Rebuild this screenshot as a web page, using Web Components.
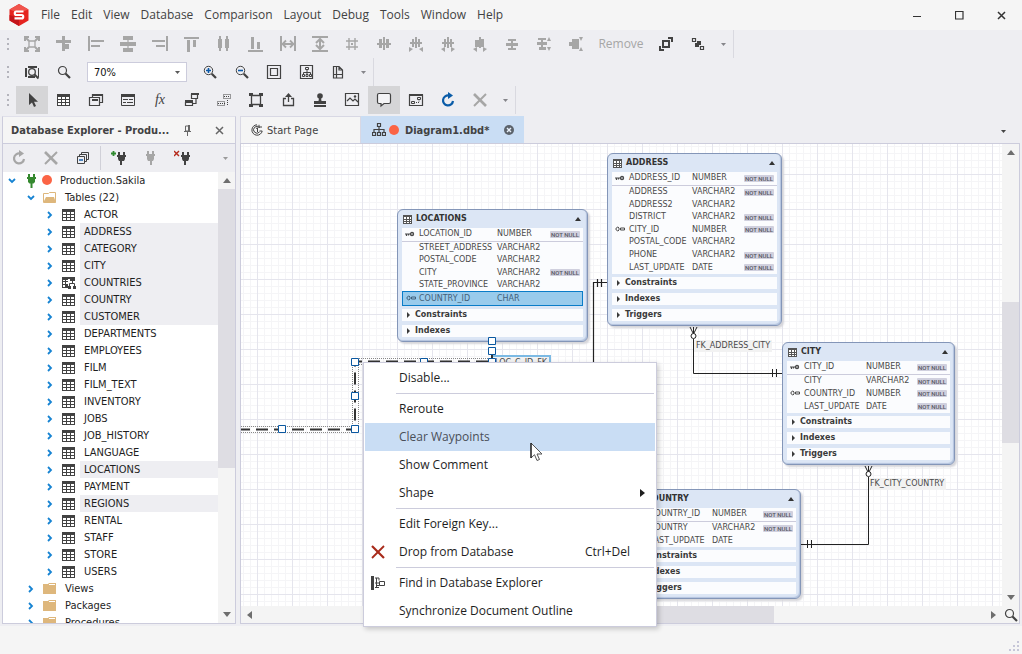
<!DOCTYPE html>
<html lang="en">
<head>
<meta charset="utf-8">
<title>Database Studio</title>
<style>
  :root {
    --line: #ccccdc;
    --chrome: #eeeef2;
    --light: #f5f5f5;
    --ink: #424242;
    --text: #1e1e1e;
    --mute: #a6a6a6;
    --accent: #c9ddf4;
    --ui: "Open Sans", "Noto Sans", sans-serif;
    --tree: "DejaVu Sans Condensed", "DejaVu Sans", sans-serif;
    --diagram: "DejaVu Sans", sans-serif;
  }
  body { margin: 0; background: var(--chrome); font: 11px/16px var(--ui); color: var(--text); }
</style>
</head>
<body>
<studio-app></studio-app>

<script>
const ICONS = {
  logo: [20, 22, '<path d="M10 0 19.5 5.5V16.5L10 22 .5 16.5V5.5Z" fill="#e5241f" stroke="none"/><path d="M10 0 19.5 5.5 10 9 .5 5.5Z" fill="#f0544c" stroke="none"/><path d="M10 22 .5 16.5V11l9.500 3Z" fill="#c4151a" stroke="none"/><path d="M14.500 7.500H7.200q-1.400 0-1.400 1.700T7.200 11h5.600q1.400 0 1.400 1.700t-1.400 1.700H5.500" fill="none" stroke="#fff" stroke-width="2.200"/>'],
  fit: [16, 16, '<path d="M5 5h6v6H5z" stroke-width="1.300"/><path d="M2 2l3 3M14 2l-3 3M2 14l3-3M14 14l-3-3" stroke-width="2"/><path d="M1 5V1h4M11 1h4v4M15 11v4h-4M5 15H1v-4" stroke-width="2"/>'],
  snap: [16, 16, '<path d="M0 4h15v3H0zM6 0h3v15H6zM9 8h4v5H9z" class="f"/>'],
  left: [16, 16, '<path d="M0 0h2v15H0zM3 4h13v2H3zM3 9h9v2H3z" class="f"/>'],
  centerh: [16, 16, '<path d="M3 0h10v4H3zM0 6h16v4H0zM3 12h10v4H3z" class="f"/><path d="M7 4h2v8H7z" class="f" opacity=".6"/>'],
  right: [16, 16, '<path d="M14 0h2v15h-2zM0 4h13v2H0zM4 9h9v2H4z" class="f"/>'],
  top: [16, 16, '<path d="M0 1h15v2H0zM3 4h3v12H3zM9 4h3v7H9z" class="f"/>'],
  middle: [16, 16, '<path d="M2 3h4v9H2zM9 3h4v9H9zM3 0h2v15H3zM10 0h2v15h-2z" class="f"/>'],
  bottom: [16, 16, '<path d="M0 14h15v2H0zM3 1h3v12H3zM9 6h3v7H9z" class="f"/>'],
  width: [16, 16, '<path d="M1 0v15M15 0v15" stroke-width="2"/><path d="M3 8h10M6 4.500 2.500 8 6 11.500M10 4.500 13.500 8 10 11.500" stroke-width="1.800"/>'],
  height: [16, 16, '<path d="M0 1h16M0 15h16" stroke-width="2"/><path d="M8 3v10M4 7l4-4 4 4M4 9l4 4 4-4" stroke-width="2"/>'],
  hash: [16, 16, '<path d="M5 2v12M11 2v12M2 5h12M2 11h12" stroke-width="1.400"/><path d="M7 7h2v2H7z" class="f"/>'],
  space: [16, 16, '<path d="M3 3h3v9H3zM7 1h2v13H7zM10 3h3v9h-3zM1 7h14v2H1z" class="f"/>'],
  spacemore: [16, 16, '<path d="M4 3h2v8H4zM7 1h2v11H7zM10 3h2v8h-2zM2 6h12v2H2zM1 11l4 2-4 3zM15 11l-4 2 4 3z" class="f"/>'],
  spaceless: [16, 16, '<path d="M4 3h2v8H4zM7 1h2v11H7zM10 3h2v8h-2zM2 6h12v2H2zM5 11l-4 2 4 3zM11 11l4 2-4 3z" class="f"/>'],
  spacenone: [16, 16, '<path d="M3 4h4v7H3zM7 1h2v11H7zM9 3h3v8H9zM5 11l-4 2 4 3zM11 11l4 2-4 3z" class="f"/>'],
  vspace: [16, 16, '<path d="M4 3h8v2H4zM2 7h12v3H2zM4 12h8v2H4zM7 5h2v8H7z" class="f"/>'],
  vspacemore: [16, 16, '<path d="M2 2h8v2H2zM1 6h10v3H1zM3 11h7v3H3zM5 4h2v8H5zM11 5l2-4 2 4zM11 11l2 4 2-4z" class="f"/>'],
  vspacenone: [16, 16, '<path d="M4 3h7v3H4zM1 6h10v4H1zM4 10h7v3H4zM11 1l2 4 2-4zM11 15l2-4 2 4z" class="f"/>'],
  grow: [16, 16, '<path d="M5 5h6v6H5z" stroke-width="2"/><path d="M10 2h4v4M2 10v4h4" stroke-width="2"/>'],
  chain: [16, 16, '<path d="M2.500 2.500h3v3h-3zM10.500 10.500h3v3h-3z" stroke-width="1.200"/><path d="M7 5h4v4H9v2H5V7h2z" class="f"/>'],
  view: [16, 16, '<path d="M4 2h9v2H4zM4 12h7v2H4zM1 4h2v9H1zM14 4h1v9h-1z" class="f"/><circle cx="8" cy="8" r="3.300" stroke-width="1.300"/><path d="m10.500 10.500 4 4" stroke-width="2"/>'],
  zoom: [16, 16, '<circle cx="6.500" cy="6.500" r="4" stroke-width="1.200"/><path d="m9.500 9.500 4.500 4.500" stroke-width="2.200"/>'],
  zoomin: [16, 16, '<circle cx="6.500" cy="6.500" r="4.200"/><path d="m9.700 9.700 4.300 4.300" stroke-width="2.200"/><path d="M4 6.500h5M6.500 4v5" stroke="#0a58a8" stroke-width="1.600"/>'],
  zoomout: [16, 16, '<circle cx="6.500" cy="6.500" r="4.200"/><path d="m9.700 9.700 4.300 4.300" stroke-width="2.200"/><path d="M4 6.500h5" stroke="#0a58a8" stroke-width="1.600"/>'],
  page: [16, 16, '<path d="M1.500 1.500h13v13h-13zM4.500 4.500h7v7h-7z" stroke-width="1.200"/>'],
  diagram: [16, 16, '<path d="M2.500 1.500h12v13h-12z" stroke-width="1.200"/><path d="M7.500 3.500h3v2h-3zM4.500 10.500h2v2h-2zM8 10.500h2v2H8zM11.500 10.500h2v2h-2zM9 6v4M5.500 10V8.500h7V10"/>'],
  pages: [16, 16, '<path d="M3.500 2.500H9l3.500 3.500v8h-9zM6.500 2v12M3 10.500h10M9 2.500V6h3.500" stroke-width="1.200"/>'],
  pointer: [16, 16, '<path d="M5 1v12l3-2.500L10 15l2-1-2-4.200h4z" class="f"/>'],
  table: [14, 12, '<path d="M0 0h13v12H0z" class="f"/><path d="M1 3h3v2H1zM5 3h3v2H5zM9 3h3v2H9zM1 6h3v2H1zM5 6h3v2H5zM9 6h3v2H9zM1 9h3v2H1zM5 9h3v2H5zM9 9h3v2H9z" class="w"/>'],
  smalltable: [9, 9, '<path d="M0 0h9v9H0z" class="f"/><path d="M1 2h2v2H1zM4 2h2v2H4zM7 2h1v2H7zM1 5h2v1H1zM4 5h2v1H4zM7 5h1v1H7zM1 7h2v1H1zM4 7h2v1H4zM7 7h1v1H7z" class="w"/>'],
  tabletree: [14, 12, '<path d="M0 0h6v11H0zM6 0h2v2H6z" class="f"/><path d="M1 3h2v1H1zM4 3h2v1H4zM1 5h2v2H1zM4 5h2v2H4zM1 8h2v2H1z" class="w"/><path d="M8 0h5v4H8zM6 9h3v3H6zM11 9h3v3h-3z" class="f"/><path d="M10.500 4v2.500M7.500 9V6.500h5V9"/>'],
  copies: [16, 16, '<path d="M4.500 5V2.500h10v8H12M1.500 5.500h10v8h-10z" stroke-width="1.200"/><path d="M4 7h6v2H4zM4 2h11v2H4z" class="f"/>'],
  form: [16, 16, '<path d="M1.500 3h13v10.500h-13z" /><path d="M1 2h14v3H1zM3 7h5v1H3zM9 7h4v1H9zM3 10h3v1H3zM7 10h6v1H7z" class="f"/>'],
  rel: [16, 16, '<path d="M7 1h8v2H7zM1 8h8v3H1z" class="f"/><path d="M7.500 2.500h6v4h-6zM1.500 10.500h7v3h-7zM9 11.500h3V7" stroke-width="1.200"/>'],
  reldot: [16, 16, '<path d="M7.500 2.500h7v4h-7zM1.500 9.500h7v4h-7zM2 11.500h8M8 4.500h6M11.500 13V7" stroke-dasharray="1 1"/>'],
  frame: [16, 16, '<path d="M3.500 3.500h9v9h-9z" stroke-width="1.300"/><path d="M1 1h4v3H1zM11 1h4v3h-4zM1 12h4v3H1zM11 12h4v3h-4z" class="f"/>'],
  exporty: [16, 16, '<path d="M6 6.500H3.500v7h10v-7H11M8.500 3v7" stroke-width="1.300"/><path d="M5 5 8.500 1 12 5z" class="f"/>'],
  stamp: [16, 16, '<circle cx="8" cy="4" r="2.800" class="f"/><path d="M7 6h2l.5 3H14v3H2V9h4.500zM2 13h12v2H2z" class="f"/>'],
  image: [16, 16, '<path d="M1.500 1.500h13v12h-13zM3 9l3-3 3 3 2-2 3 3" stroke-width="1.200"/><circle cx="11" cy="4.500" r="1.200" class="f"/>'],
  note: [16, 16, '<path d="M3 1.500h10q1.500 0 1.500 1.500v7q0 1.500-1.500 1.500H8L5 14v-2.500H3Q1.500 11.500 1.500 10V3Q1.500 1.500 3 1.500Z" stroke-width="1.200" fill="#f4f4f6"/>'],
  overview: [16, 16, '<path d="M1.500 3h13v10.500h-13z" stroke-width="1.200"/><path d="M1 2h14v2H1z" class="f"/><path d="M3.500 9.500h3v2h-3zM9.500 5.500h3v2h-3z"/><path d="M8 10.500h3v-2" stroke-dasharray="1 1"/>'],
  refresh: [16, 16, '<path d="M9 3.500A5 5 0 1 0 13 9" stroke-width="2.200"/><path d="M8 0v7l5-3.500z" class="f"/>'],
  cross: [16, 16, '<path d="m2 2 12 12" stroke-width="2.600"/><path d="M14 2 2 14" stroke-width="2"/>'],
  collapse: [16, 16, '<path d="M2.500 6.500h7v7h-7zM4.500 6V4.500h7v7H10M6.500 4V2.500h7v7H12"/><path d="M4 10h4" stroke="#0a58a8" stroke-width="1.400"/>'],
  plug: [16, 16, '<path d="M5 1h2v4H5zM10 1h2v4h-2zM4 4h9v2H4zM5 6h7v3l-1 2H6L5 9zM8 11h2v4H8z" class="f"/>'],
  plugadd: [16, 16, '<path d="M8 2h2v3H8zM13 2h2v3h-2zM7 5h9v2H7zM8 7h7v2l-1 2H9L8 9zM10 11h2v4h-2z" class="f"/><path d="M1 3.500h5M3.500 1v5" stroke="#2f8a2f" stroke-width="1.800"/>'],
  plugdel: [16, 16, '<path d="M8 2h2v3H8zM13 2h2v3h-2zM7 5h9v2H7zM8 7h7v2l-1 2H9L8 9zM10 11h2v4h-2z" class="f"/><path d="m0 1 5 5M5 1 0 6" stroke="#b52a1c" stroke-width="1.400"/>'],
  tplug: [9, 14, '<path d="M1 0h2v4H1zM6 0h2v4H6zM0 3h9v2H0zM1 5h7v3L6.500 9.500h-4L1 8zM3.500 9h2v5h-2z" class="f"/>'],
  folder: [14, 12, '<path d="M0 1h5l1-1h7v11H0z" class="f"/><path d="M6 1.500h6" stroke="#fff"/>'],
  folderopen: [14, 12, '<path d="M.5 10V1.500h5l1-1h6V10" /><path d="M3 5h8l2 6H0z" class="f"/>'],
  chevright: [6, 8, '<path d="m1 1 3 3-3 3" stroke-width="1.800"/>'],
  chevdown: [8, 6, '<path d="m1 1 3 3 3-3" stroke-width="1.800"/>'],
  pin: [8, 11, '<path d="M1.500 1h4v5h-4z"/><path d="M4 0h2v6H4zM0 6h7v1H0zM3 7h1v4H3z" class="f"/>'],
  close: [9, 9, '<path d="m1 1 7 7M8 1 1 8" stroke-width="1.500"/>'],
  min: [9, 9, '<path d="M0 5h8v1H0z" class="f"/>'],
  max: [9, 9, '<path d="M.5.500h7.500v7.500H.5z" stroke-width="1.200"/>'],
  spiral: [12, 12, '<path d="M6 .8A5.200 5.200 0 1 0 11.200 7H8.500M8.500 3.500A3.400 3.400 0 1 0 8.500 8M8 .8V4M11 3H8M5 4.500l1.500-.7V8"/>'],
  orgchart: [14, 14, '<path d="M5.500.5h3v3h-3zM.5 9.500h3v3h-3zM5.500 9.500h3v3h-3zM10.500 9.500h3v3h-3zM7 4v5M2 9V6.500h10V9" stroke-width="1.200"/>'],
  tabclose: [10, 10, '<circle cx="5" cy="5" r="5" class="f"/><path d="m3 3 4 4M7 3 3 7" stroke="#e9f1fb" stroke-width="1.400"/>'],
  key: [10, 6, '<path d="M0 3h6M1.500 3v2M3.500 3v1.500" stroke-width="1.200"/><circle cx="7" cy="3" r="1.500" stroke-width="1.400"/>'],
  fkey: [10, 6, '<path d="M4 1.700A1.800 1.800 0 1 0 4 4.300M3 3h2"/><path d="M5.500 2h4v2h-4z"/>'],
  down: [5, 3, '<path d="M0 0h5L2.500 3z" class="f"/>'],
  sup: [8, 5, '<path d="M0 5h8L4 0z" class="f"/>'],
  fold: [6, 4, '<path d="M0 4h6L3 0z" class="f"/>'],
  sdown: [8, 5, '<path d="M0 0h8L4 5z" class="f"/>'],
  sleft: [5, 8, '<path d="M5 0v8L0 4z" class="f"/>'],
  sright: [5, 8, '<path d="M0 0v8l5-4z" class="f"/>'],
  small: [3, 6, '<path d="M0 0v6l3-3z" class="f"/>'],
  drop: [14, 14, '<path d="m1 1 12 12" stroke-width="2.200"/><path d="M13 1 1 13" stroke-width="1.800"/>'],
  find: [15, 14, '<path d="M0 0h3v14H0z" class="f"/><path d="M4 2h4v2.500M4 11.500h4M4 7h4.500M5.500 2v10M8.500 5.500h5v4h-5zM5.500 9.500h3"/>']
};

class BaseElement extends HTMLElement {
  connectedCallback() {
    if (this.shadowRoot) return;
    this.attachShadow({ mode: 'open' }).innerHTML =
      `<style>*{box-sizing:border-box}button{font:inherit;color:inherit;background:none;border:0;padding:0;margin:0}${this.css()}</style>${this.html()}`;
  }
  css() { return ''; }
  html() { return ''; }
  attr(n, d = '') { return this.getAttribute(n) ?? d; }
}
const define = (name, cls) => customElements.define(name, cls);

define('ui-icon', class extends BaseElement {
  css() { return `:host{display:inline-flex;flex:none}svg{display:block;fill:none;stroke:currentColor}.f{fill:currentColor;stroke:none}.w{fill:#fff;stroke:none}`; }
  html() {
    const [w, h, body] = ICONS[this.attr('name')];
    return `<svg width="${w}" height="${h}" viewBox="0 0 ${w} ${h}" aria-hidden="true">${body}</svg>`;
  }
});

define('tool-button', class extends BaseElement {
  css() { return `
    :host{display:flex;flex:none;color:var(--ink)}
    :host([off]){color:var(--mute)}
    :host([accent]){color:#0a5ca8}
    button{width:32px;height:28px;display:flex;align-items:center;justify-content:center}
    :host([pressed]) button{background:#d5d5d7}
    :host([wide]) button{width:58px;font-size:12px}
    ::slotted(i){font:italic 14px "Liberation Serif",serif}`; }
  html() { return `<button type="button" aria-label="${this.attr('label')}"${this.hasAttribute('off') ? ' disabled' : ''}>${this.hasAttribute('icon') ? `<ui-icon name="${this.attr('icon')}"></ui-icon>` : '<slot></slot>'}</button>`; }
});

define('tool-bar', class extends BaseElement {
  css() { return `
    :host{display:flex;height:28px;align-items:center}
    .grip{width:2px;height:13px;margin:0 7px;flex:none;background:repeating-linear-gradient(#b4b4bc 0 2px,transparent 2px 5px)}
    .more{width:20px;height:28px;display:flex;align-items:center;justify-content:center;color:#85858a;border-right:1px solid #d9d9e0}`; }
  html() { return `<span class="grip"></span><slot></slot><button class="more" type="button" aria-label="Toolbar options"><ui-icon name="down"></ui-icon></button>`; }
});

define('zoom-box', class extends BaseElement {
  css() { return `
    :host{display:flex;position:relative;margin:0 7px;width:100px;height:20px;color:#5a5a5a}
    select{appearance:none;width:100%;border:1px solid var(--line);border-radius:0;background:#fff;padding:0 6px;font:11px var(--tree);color:#111}
    ui-icon{position:absolute;right:7px;top:9px;pointer-events:none}`; }
  html() { return `<select aria-label="Zoom"><option>70%</option><option>100%</option></select><ui-icon name="down"></ui-icon>`; }
});

define('title-bar', class extends BaseElement {
  css() { return `
    :host{display:flex;height:30px;align-items:center;background:var(--light);padding-left:9px;color:var(--ink)}
    nav{display:flex;gap:1px;margin-left:7px;flex:1}
    nav button{padding:0 5px;height:30px;font-size:12px;line-height:16px}
    .win{width:42px;height:30px;display:flex;align-items:center;justify-content:center;color:#333}`; }
  html() {
    const m = ['File', 'Edit', 'View', 'Database', 'Comparison', 'Layout', 'Debug', 'Tools', 'Window', 'Help'];
    return `<ui-icon name="logo"></ui-icon><nav aria-label="Main menu">${m.map(t => `<button type="button">${t}</button>`).join('')}</nav>
    ${[['min', 'Minimize'], ['max', 'Maximize'], ['close', 'Close']].map(([i, l]) => `<button class="win" type="button" aria-label="${l}"><ui-icon name="${i}"></ui-icon></button>`).join('')}`;
  }
});

define('scroll-bar', class extends BaseElement {
  css() { return `
    :host{display:flex;flex-direction:column;flex:none;width:17px;background:#f4f4f4;color:#6e6e6e}
    :host([horizontal]){flex-direction:row;width:auto;height:17px}
    .end{flex:none;display:flex;width:17px;height:17px;align-items:center;justify-content:center}
    .track{flex:1;display:flex;flex-direction:inherit}
    .thumb{background:#dedde3}`; }
  html() {
    const h = this.hasAttribute('horizontal'), p = h ? 'width' : 'height';
    return `<span class="end"><ui-icon name="${h ? 'sleft' : 'sup'}"></ui-icon></span><div class="track"><div style="${p}:${this.attr('from')}%"></div><div class="thumb" style="${p}:${this.attr('size')}%"></div></div><span class="end"><ui-icon name="${h ? 'sright' : 'sdown'}"></ui-icon></span>`;
  }
});

define('tree-item', class extends BaseElement {
  css() { return `
    :host{display:flex;height:17px;flex:none;align-items:stretch;padding-left:calc(var(--level) * 19px);color:var(--text)}
    .chev{width:16px;color:#1683d2}.ico{width:22px;color:var(--ink)}
    .chev,.ico{flex:none;display:flex;align-items:center;justify-content:center}
    .dot{width:10px;height:10px;border-radius:50%;background:#fb6445;margin:3px 4px 0 0}
    .label{flex:1;padding-left:4px;line-height:18px;white-space:nowrap}
    :host([marked]) .label{background:var(--chrome)}
    .folder,.folderopen{color:#deb77c}.tplug{color:#35892f}`; }
  html() {
    this.style.setProperty('--level', this.attr('level'));
    const ic = this.attr('icon', 'table');
    return `<span class="chev"><ui-icon name="${this.hasAttribute('open') ? 'chevdown' : 'chevright'}"></ui-icon></span><span class="ico ${ic}"><ui-icon name="${ic}"></ui-icon></span>${this.hasAttribute('dot') ? '<span class="dot"></span>' : ''}<span class="label"><slot></slot></span>`;
  }
});

define('explorer-panel', class extends BaseElement {
  css() { return `
    :host{display:flex;flex-direction:column;width:234px;flex:none;border:1px solid var(--line);border-top-color:#e0e0ea;min-height:0;font:11px/17px var(--tree)}
    header{display:flex;align-items:center;height:26px;flex:none;background:var(--light);padding:0 11px 0 8px;color:var(--ink)}
    h2{flex:1;margin:0;font:bold 11px/17px var(--tree);white-space:nowrap}
    header button{display:flex;width:9px;margin-left:22px;color:#666}
    header button:first-of-type{margin:0}
    .tools{display:flex;height:29px;flex:none;align-items:center;background:var(--chrome);border-top:1px solid var(--line)}
    .sep{width:1px;height:24px;background:#d0d0d8;margin:0 1px}
    .more{flex:1;display:flex;justify-content:flex-end;padding-right:7px;color:#9a9a9a}
    .body{display:flex;flex:1;min-height:0;background:#fff}
    .tree{flex:1;min-width:0;overflow:hidden;display:flex;flex-direction:column;padding-left:1px}`; }
  html() {
    const tables = 'ACTOR ADDRESS* CATEGORY* CITY* COUNTRIES* COUNTRY* CUSTOMER* DEPARTMENTS EMPLOYEES FILM FILM_TEXT INVENTORY JOBS JOB_HISTORY LANGUAGE LOCATIONS* PAYMENT REGIONS* RENTAL STAFF STORE USERS'.split(' ');
    return `<header><h2>Database Explorer - Produ...</h2><button type="button" aria-label="Auto hide"><ui-icon name="pin"></ui-icon></button><button type="button" aria-label="Close panel"><ui-icon name="close"></ui-icon></button></header>
    <div class="tools"><tool-button off icon="refresh" label="Refresh"></tool-button><tool-button off icon="cross" label="Delete"></tool-button><tool-button icon="collapse" label="Collapse all"></tool-button><span class="sep"></span><tool-button icon="plugadd" label="New connection"></tool-button><tool-button off icon="plug" label="Connect"></tool-button><tool-button icon="plugdel" label="Disconnect"></tool-button><button class="more" type="button" aria-label="Toolbar options"><ui-icon name="down"></ui-icon></button></div>
    <div class="body"><div class="tree" role="tree">
      <tree-item level="0" open icon="tplug" dot>Production.Sakila</tree-item>
      <tree-item level="1" open icon="folderopen">Tables (22)</tree-item>
      ${tables.map(t => `<tree-item level="2"${t.endsWith('*') ? ' marked' : ''}${t === 'COUNTRIES*' ? ' icon="tabletree"' : ''}>${t.replace('*', '')}</tree-item>`).join('')}
      ${['Views', 'Packages', 'Procedures'].map(t => `<tree-item level="1" icon="folder">${t}</tree-item>`).join('')}
    </div><scroll-bar from="0" size="67"></scroll-bar></div>`;
  }
});

const NN = true;
const ENTITIES = {
  LOCATIONS: { name: 78, sections: ['Constraints', 'Indexes'], rows: [['key', 'LOCATION_ID', 'NUMBER', NN], ['', 'STREET_ADDRESS', 'VARCHAR2'], ['', 'POSTAL_CODE', 'VARCHAR2'], ['', 'CITY', 'VARCHAR2', NN], ['', 'STATE_PROVINCE', 'VARCHAR2'], ['fkey', 'COUNTRY_ID', 'CHAR', false, true]] },
  ADDRESS: { name: 63, sections: ['Constraints', 'Indexes', 'Triggers'], rows: [['key', 'ADDRESS_ID', 'NUMBER', NN], ['', 'ADDRESS', 'VARCHAR2', NN], ['', 'ADDRESS2', 'VARCHAR2'], ['', 'DISTRICT', 'VARCHAR2', NN], ['fkey', 'CITY_ID', 'NUMBER', NN], ['', 'POSTAL_CODE', 'VARCHAR2'], ['', 'PHONE', 'VARCHAR2', NN], ['', 'LAST_UPDATE', 'DATE', NN]] },
  CITY: { name: 62, sections: ['Constraints', 'Indexes', 'Triggers'], rows: [['key', 'CITY_ID', 'NUMBER', NN], ['', 'CITY', 'VARCHAR2', NN], ['fkey', 'COUNTRY_ID', 'NUMBER', NN], ['', 'LAST_UPDATE', 'DATE', NN]] },
  COUNTRY: { name: 63, sections: ['Constraints', 'Indexes', 'Triggers'], rows: [['key', 'COUNTRY_ID', 'NUMBER', NN], ['', 'COUNTRY', 'VARCHAR2', NN], ['', 'LAST_UPDATE', 'DATE']] }
};

define('entity-card', class extends BaseElement {
  css() { return `
    :host{display:flex;flex-direction:column;padding:0 4px 4px;border:1px solid #8496b8;border-radius:6px;background:#dce6f5;box-shadow:inset -1px -1px 1px #b3c3de,2px 2px 2px #d5d5da;font:8px/10px var(--diagram);color:#4a4a4a}
    header{display:flex;align-items:center;height:18px;flex:none;padding-left:1px;color:#555}
    h3{flex:1;margin:0 0 0 4px;font:bold 8px/10px var(--diagram);color:#333}
    header ui-icon:last-child{margin-right:2px;color:#333}
    .body{flex:1;min-height:0;background:#ffffffe0}
    table{width:100%;height:100%;border-collapse:separate;border-spacing:0;table-layout:fixed}
    td{padding:0;white-space:nowrap;vertical-align:middle}
    .k{padding-left:3px}
    ui-icon{vertical-align:middle}
    tr:first-child td{border-bottom:1px solid #ccccdc}
    .tag{display:block;width:30px;height:7px;text-align:center;background:#d0d0de;color:#55555f;font:500 6px/8px Roboto,sans-serif;border-radius:1px}
    tr.sel td{background:#99cbec;border:solid #0a7cc8;border-width:1px 0;color:#41607a}
    tr.sel td:first-child{border-left-width:1px}tr.sel td:last-child{border-right-width:1px}
    .sec{display:flex;align-items:center;height:12px;margin-top:4px;flex:none;background:#ffffffe0;padding-left:5px;font-weight:bold;color:#3a3a3a}
    .body+.sec{margin-top:3px}
    .sec ui-icon{margin-right:5px}`; }
  html() {
    const n = this.attr('entity'), e = ENTITIES[n];
    return `<header><ui-icon name="smalltable"></ui-icon><h3>${n}</h3><ui-icon name="fold"></ui-icon></header>
    <div class="body"><table><colgroup><col style="width:17px"><col style="width:${e.name}px"><col><col style="width:33px"></colgroup>
    ${e.rows.map(([k, c, t, nn, sel]) => `<tr${sel ? ' class="sel"' : ''}><td class="k">${k ? `<ui-icon name="${k}"></ui-icon>` : ''}</td><td>${c}</td><td>${t}</td><td>${nn ? '<span class="tag">NOT NULL</span>' : ''}</td></tr>`).join('')}</table></div>
    ${e.sections.map(s => `<div class="sec"><ui-icon name="small"></ui-icon>${s}</div>`).join('')}`;
  }
});

define('diagram-canvas', class extends BaseElement {
  css() { return `
    :host{display:block;position:relative;overflow:hidden;flex:1;min-width:0;
      background:
      linear-gradient(90deg,#e5e5ed 1px,transparent 1px) 16px 30px/35px 35px,
      linear-gradient(#e5e5ed 1px,transparent 1px) 16px 30px/35px 35px,
      linear-gradient(90deg,#f5f5f7 1px,transparent 1px) 2px 2px/7px 7px,
      linear-gradient(#f5f5f7 1px,transparent 1px) 2px 2px/7px 7px,#fff}
    entity-card,.lbl,svg{position:absolute}
    svg{left:0;top:0;width:100%;height:100%}
    .lbl{background:#f2f2f2;padding:0 2px;font:8px/12px var(--diagram);color:#4a4a4a}
    .selected{border:2px solid #7cbae4;border-bottom:0;border-left-width:1px}
    .a{left:156px;top:65px;width:191px;height:133px}
    .b{left:366px;top:9px;width:175px;height:173px}
    .c{left:541px;top:198px;width:173px;height:123px}
    .d{left:386px;top:345px;width:174px;height:110px}`; }
  html() {
    const handles = [[41, 285], [114, 285], [114, 252], [114, 218], [183, 218], [251, 218], [251, 207], [251, 197]];
    return `<entity-card class="a" entity="LOCATIONS"></entity-card><entity-card class="b" entity="ADDRESS"></entity-card>
    <entity-card class="c" entity="CITY"></entity-card><entity-card class="d" entity="COUNTRY"></entity-card>
    <span class="lbl" style="left:453px;top:196px">FK_ADDRESS_CITY</span><span class="lbl" style="left:627px;top:334px">FK_CITY_COUNTRY</span>
    <span class="lbl selected" style="left:251px;top:211px">LOC_C_ID_FK</span>
    <svg fill="none" stroke="#222" aria-hidden="true">
      <path d="M366 138.500H352.500V240M356.500 135v8M360.500 135v8" stroke-width="1.200"/>
      <path d="M452.500 195v34.500H541M531.500 225v8M535.500 225v8M449 183l3.500 7 3.500-7M452.500 183v7"/><circle cx="452.500" cy="192" r="2.500" fill="#fff"/>
      <path d="M627.500 333v67.500H560M566.500 396v8M570.500 396v8M624 322l3.500 7 3.500-7M627.500 322v6"/><circle cx="627.500" cy="330" r="2.500" fill="#fff"/>
      <g stroke="#888" stroke-dasharray="1 1"><path d="M0 282.500H111.500V214.500H251M0 288.500H117.500V220.500H251"/></g>
      <path d="M0 285.500H114V217.500H251V197" stroke-width="2" stroke-dasharray="12 6" stroke="#333" stroke-dashoffset="3"/>
      <g fill="#fff" stroke="#0a58a0">${handles.map(([x, y]) => `<path d="M${x - 3.5} ${y - 3.5}h7v7h-7z"/>`).join('')}</g>
    </svg>`;
  }
});

define('document-area', class extends BaseElement {
  css() { return `
    :host{display:flex;flex-direction:column;flex:1;min-width:0;font:11px/17px var(--tree)}
    .tabs{display:flex;height:27px;flex:none}
    .tab{display:flex;align-items:center;height:27px;border:1px solid #d8d8e4;border-bottom:0;background:var(--light);color:var(--ink);text-align:left;white-space:nowrap}
    .start{width:121px;padding-left:10px;gap:4px}
    .doc{width:163px;padding:0 9px 0 10px;background:var(--accent);border-color:var(--accent);font-weight:bold}
    .dot{width:10px;height:10px;border-radius:50%;background:#fb6445;margin:0 6px 0 3px}
    .doc .name{flex:1}
    .doc ui-icon:last-child{color:#5c636c}
    .list{margin-left:auto;padding:0 14px;color:#444}
    .frame{display:grid;grid-template:minmax(0,1fr) 17px / minmax(0,1fr) 17px;flex:1;min-height:0;border:1px solid var(--line)}
    .corner{background:#f4f4f4;display:flex;align-items:center;justify-content:center;color:var(--ink)}`; }
  html() { return `<div class="tabs" role="tablist"><button class="tab start" type="button" role="tab"><ui-icon name="spiral"></ui-icon>Start Page</button><button class="tab doc" type="button" role="tab" aria-selected="true"><ui-icon name="orgchart"></ui-icon><span class="dot"></span><span class="name">Diagram1.dbd*</span><ui-icon name="tabclose"></ui-icon></button><button class="list" type="button" aria-label="Open documents"><ui-icon name="down"></ui-icon></button></div>
    <div class="frame"><diagram-canvas></diagram-canvas><scroll-bar from="33" size="33"></scroll-bar><scroll-bar horizontal from="17" size="54"></scroll-bar><button class="corner" type="button" aria-label="Pan and zoom"><ui-icon name="zoom"></ui-icon></button></div>`; }
});

define('menu-item', class extends BaseElement {
  css() { return `
    :host{display:block}
    button{display:flex;align-items:center;width:100%;height:28px;text-align:left;color:#1e1e1e;padding-right:10px}
    :host([active]) button{background:var(--accent);color:#4a4f58}
    .ico{width:34px;flex:none;padding-left:6px;display:flex}
    .label{flex:1}.key{margin-right:15px}`; }
  html() { return `<button type="button" role="menuitem"><span class="ico" style="color:${this.attr('tint', '#424242')}">${this.hasAttribute('icon') ? `<ui-icon name="${this.attr('icon')}"></ui-icon>` : ''}</span><span class="label"><slot></slot></span>${this.hasAttribute('key') ? `<span class="key">${this.attr('key')}</span>` : ''}${this.hasAttribute('sub') ? '<ui-icon name="sright"></ui-icon>' : ''}</button>`; }
});

define('context-menu', class extends BaseElement {
  css() { return `
    :host{display:block;padding:1px;background:#fff;border:1px solid var(--line);box-shadow:2px 2px 5px #0003;font:12px/16px var(--ui)}
    hr{height:1px;border:0;background:var(--line);margin:1px 1px 1px 31px}
    .pointer{position:absolute;left:166px;top:79px}`; }
  html() { return `
    <menu-item>Disable...</menu-item><hr>
    <menu-item>Reroute</menu-item><menu-item active>Clear Waypoints</menu-item><menu-item>Show Comment</menu-item><menu-item sub>Shape</menu-item><hr>
    <menu-item>Edit Foreign Key...</menu-item><menu-item icon="drop" tint="#a82a1a" key="Ctrl+Del">Drop from Database</menu-item><hr>
    <menu-item icon="find">Find in Database Explorer</menu-item><menu-item>Synchronize Document Outline</menu-item>
    <svg class="pointer" width="13" height="20" viewBox="0 0 13 20" aria-hidden="true"><path d="M1 1v15l3.500-3.300L7 18.500l2.500-1L7 12h5z" fill="#fff" stroke="#555"/><path d="M1 1v15" stroke="#000"/></svg>`; }
});

define('status-bar', class extends BaseElement {
  css() { return `:host{display:flex;justify-content:flex-end;align-items:flex-end;height:28px;background:var(--light)}svg{margin:0 2px 2px 0;fill:#c6c6d8}`; }
  html() { return `<svg width="11" height="11" viewBox="0 0 11 11" aria-hidden="true"><path d="M8 0h2v2H8zM4 4h2v2H4zM8 4h2v2H8zM0 8h2v2H0zM4 8h2v2H4zM8 8h2v2H8z"/></svg>`; }
});

define('studio-app', class extends BaseElement {
  css() { return `
    :host{display:flex;flex-direction:column;height:100vh;overflow:hidden;position:relative}
    title-bar,tool-bar,status-bar{flex:none}
    .work{display:flex;flex:1;min-height:0;gap:4px;padding:2px}
    context-menu{position:absolute;left:363px;top:362px;width:294px;box-sizing:border-box}`; }
  html() {
    const b = (icons, extra = '') => icons.split(' ').map(i => `<tool-button icon="${i}" label="${i}" ${extra}></tool-button>`).join('');
    return `<title-bar></title-bar>
    <tool-bar>${b('fit snap left centerh right top middle bottom width height hash space spacemore spaceless spacenone vspace vspacemore vspacenone', 'off')}<tool-button off wide label="Remove">Remove</tool-button>${b('grow chain')}</tool-bar>
    <tool-bar>${b('view zoom')}<zoom-box></zoom-box>${b('zoomin zoomout page diagram pages')}</tool-bar>
    <tool-bar>${b('pointer', 'pressed')}${b('table copies form')}<tool-button label="Function"><i>fx</i></tool-button>${b('rel reldot frame exporty stamp image')}${b('note', 'pressed')}${b('overview')}${b('refresh', 'accent')}${b('cross', 'off')}</tool-bar>
    <div class="work"><explorer-panel></explorer-panel><document-area></document-area></div>
    <status-bar></status-bar>
    <context-menu></context-menu>`;
  }
});
</script>
</body>
</html>
